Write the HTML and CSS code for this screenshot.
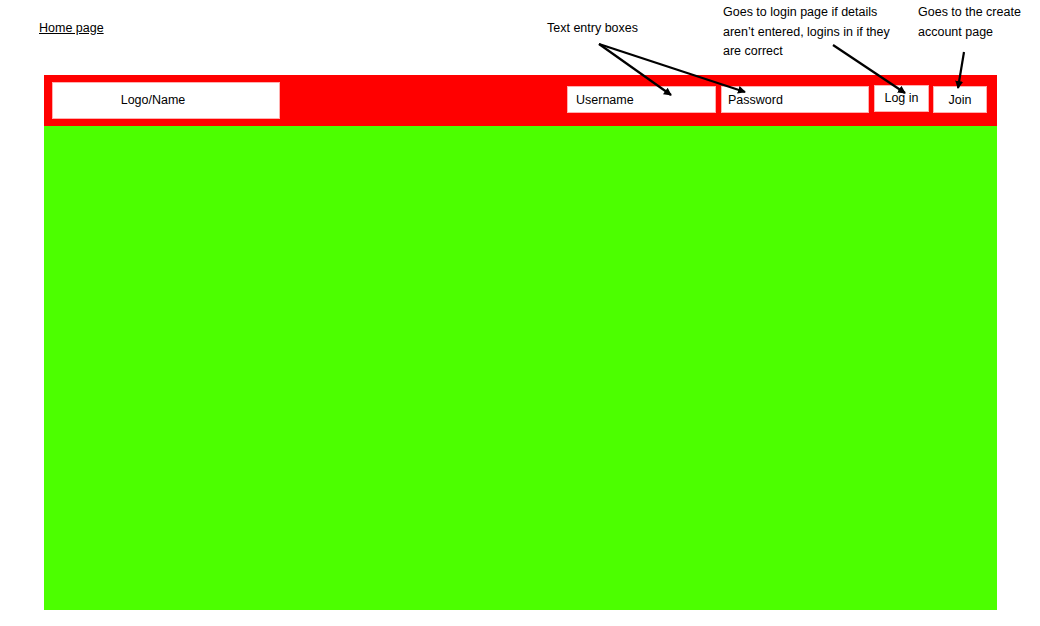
FILE: index.html
```html
<!DOCTYPE html>
<html>
<head>
<meta charset="utf-8">
<link rel="stylesheet" href="styles.css">
</head>
<body>
<div class="page">
  <a class="title">Home page</a>
  <div class="note note-text">Text entry boxes</div>
  <div class="note note-login">Goes to login page if details<br>aren’t entered, logins in if they<br>are correct</div>
  <div class="note note-join">Goes to the create<br>account page</div>
  <svg class="arrows" width="1040" height="626" viewBox="0 0 1040 626">
    <defs>
      <marker id="ah" markerWidth="8" markerHeight="8" refX="7" refY="4" orient="auto" markerUnits="userSpaceOnUse">
        <path d="M0,0 L8,4 L0,8 Z" fill="#000"/>
      </marker>
    </defs>
    <g stroke="#000" stroke-width="2.2" fill="none">
      <line x1="599" y1="44" x2="671" y2="95" marker-end="url(#ah)"/>
      <line x1="599" y1="44" x2="745" y2="92" marker-end="url(#ah)"/>
      <line x1="833" y1="45" x2="905" y2="93" marker-end="url(#ah)"/>
      <line x1="964" y1="52" x2="958" y2="88" marker-end="url(#ah)"/>
    </g>
  </svg>
  <div class="frame">
    <header class="bar">
      <div class="box logo">Logo/Name</div>
      <div class="controls">
        <div class="box field user">Username</div>
        <div class="box field pass">Password</div>
        <div class="box btn login">Log in</div>
        <div class="box btn join">Join</div>
      </div>
    </header>
    <main class="content"></main>
  </div>
</div>
</body>
</html>
```
FILE: styles.css
```css
html, body {
  margin: 0;
  padding: 0;
  background: #fff;
}
body {
  font-family: "Liberation Sans", Arial, sans-serif;
  font-size: 12.5px;
  color: #000;
}
.page {
  position: relative;
  width: 1040px;
  height: 626px;
  padding: 75px 0 0 44px;
  box-sizing: border-box;
}
.title {
  position: absolute;
  left: 39px;
  top: 21px;
  text-decoration: underline;
  color: #000;
}
.note {
  position: absolute;
  line-height: 19.5px;
}
.note-text { left: 547px; top: 19px; }
.note-login { left: 723px; top: 3px; }
.note-join { left: 918px; top: 3px; }
.arrows {
  position: absolute;
  left: 0;
  top: 0;
  pointer-events: none;
  z-index: 2;
}
.frame {
  width: 953px;
}
.bar {
  height: 51px;
  background: #ff0000;
  display: flex;
  justify-content: space-between;
  align-items: flex-start;
  padding: 0 10px 0 8px;
  box-sizing: border-box;
}
.box {
  background: #fff;
  border: 1px solid #ffb0b0;
  box-sizing: border-box;
  display: flex;
  align-items: center;
}
.logo {
  width: 228px;
  height: 37px;
  margin-top: 7px;
  justify-content: center;
  padding-right: 26px;
  padding-bottom: 2px;
}
.controls {
  display: flex;
  gap: 5px;
  margin-top: 11px;
}
.field {
  height: 27px;
  padding-left: 8px;
}
.user { width: 149px; }
.pass { width: 148px; padding-left: 6px; }
.btn {
  height: 27px;
  justify-content: center;
}
.login { width: 55px; margin-top: -1px; padding-bottom: 2px; }
.join { width: 54px; margin-left: -1px; }
.content {
  display: block;
  height: 484px;
  background: #4cff00;
}
```
